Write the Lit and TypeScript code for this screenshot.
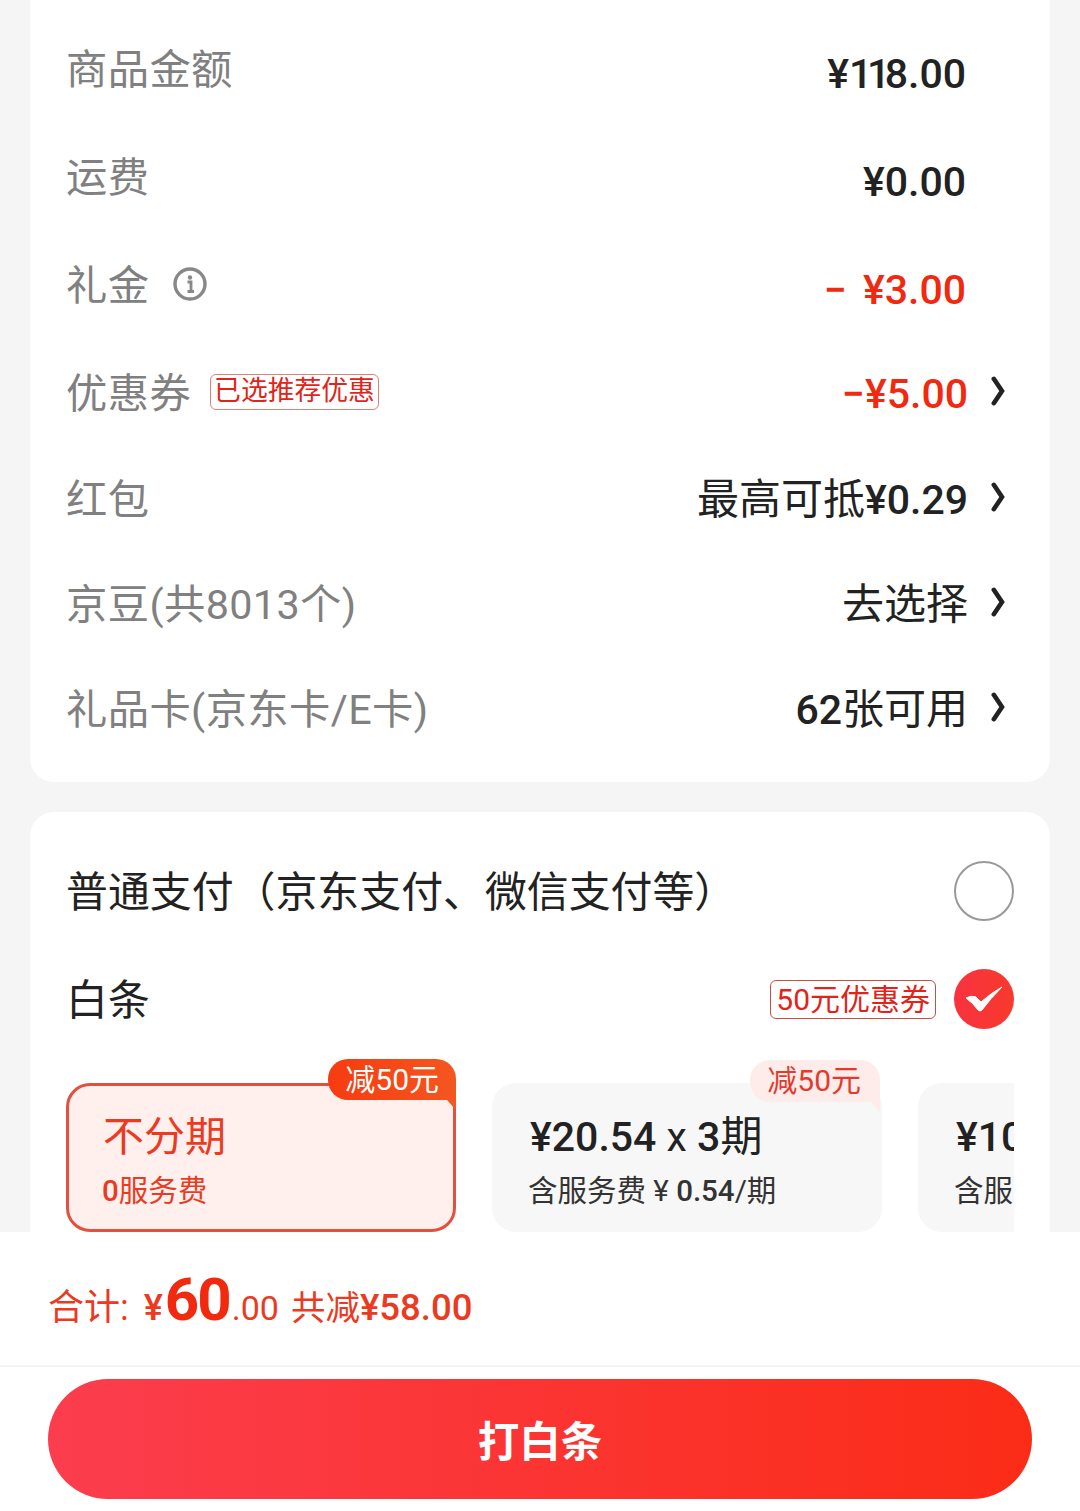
import { LitElement, html, css } from "lit";
import { customElement } from "lit/decorators.js";

const chevron = html`<svg class="chev" viewBox="0 0 14 30" width="14" height="30"><path d="M2.8 2.8 L11 15 L2.8 27.2" fill="none" stroke="#222" stroke-width="4.6" stroke-linejoin="miter" stroke-linecap="round"/></svg>`;

@customElement("app-root")
export class AppRoot extends LitElement {
  static styles = css`
    :host { display: block; width: 1080px; height: 1511px; overflow: hidden; background: #f5f5f5;
      font-family: "Roboto", "Noto Sans CJK SC", sans-serif; color: #222; }
    * { box-sizing: border-box; }
    .main { height: 1232px; overflow: hidden; padding: 0 30px; }
    .card { background: #fff; border-radius: 24px; padding: 0 36px; }
    .fees { margin-top: -20px; padding-top: 35px; padding-bottom: 19px; }
    .row { display: flex; align-items: center; height: 106px; }
    .h109 { height: 109px; }
    .h108 { height: 108px; }
    .h107 { height: 107px; }
    .h103 { height: 103px; }
    .label { font-size: 41.3px; color: #808080; white-space: nowrap; line-height: 50px; letter-spacing: 0.4px; }
    .val { margin-left: auto; font-size: 41px; font-weight: 500; color: #222; line-height: 50px; white-space: nowrap; }
    .val.low { padding-top: 8px; margin-right: 48px; }
    .val.red, .red { color: #f0290f; }
    .cjk { font-weight: 400; font-size: 42px; }
    .ones { letter-spacing: -5.5px; }
    .dash { margin-right: 6px; }
    .slot { width: 46px; display: flex; justify-content: flex-end; padding-right: 9px; flex: none; }
    .chev { display: block; margin-top: -6px; }
    .info { margin-left: 24px; margin-top: -4px; display: block; }
    .tag { margin-left: 19px; margin-top: -3px; height: 36px; padding: 0 3px 0 3px; border: 1px solid #d98478; border-radius: 6px;
      color: #e2231a; font-size: 26.8px; line-height: 32px; white-space: nowrap; }
    .pay { margin-top: 30px; padding-top: 25px; padding-bottom: 40px; }
    .pay .row { height: 108px; }
    .pay-label { font-size: 41.9px; color: #222; line-height: 50px; white-space: nowrap; padding-top: 4px; }
    .coupon { margin-left: auto; height: 39px; padding: 0 5px; border: 1px solid #c9503f; border-radius: 6px;
      color: #e2231a; font-size: 30px; line-height: 37px; white-space: nowrap; margin-right: 18px; }
    .radio { width: 60px; height: 60px; border-radius: 50%; border: 2px solid #999; flex: none; margin-left: auto; }
    .check { width: 60px; height: 60px; display: block; flex: none; }
    .plans { display: flex; gap: 36px; margin-top: 5px; padding-top: 25px; overflow: hidden; width: 948px; }
    .plan { position: relative; flex: none; width: 390px; height: 149px; border-radius: 24px; background: #f7f7f7; padding: 29px 0 0 38px; }
    .plan.on { background: #ffefed; border: 3px solid #e2503f; padding: 26px 0 0 34px; }
    .plan-title { font-size: 41px; font-weight: 500; line-height: 50px; white-space: nowrap; }
    .plan.on .plan-title { color: #ea3b22; font-weight: 400; }
    .plan-sub { font-size: 29.5px; line-height: 36px; margin-top: 11px; color: #333; white-space: nowrap; margin-left: -2px; }
    .plan.on .plan-sub { color: #ea3b22; margin-left: -1px; }
    .num { font-weight: 500; }
    .x { font-weight: 400; }
    .badge { position: absolute; top: -23px; right: 2px; height: 42px; padding: 0 19px 0 17px; font-size: 30px; line-height: 42px; white-space: nowrap;
      background: #fdecea; color: #e23b2e; border-radius: 20px 20px 0 20px; }
    .plan.on .badge { top: -27px; right: -3px; height: 41px; background: linear-gradient(90deg, #f73b10, #f4571f); color: #fff; padding: 0 17px; }
    .fold { position: absolute; top: 19px; right: 2px; width: 9px; height: 10px; background: #fdecea; clip-path: polygon(0 0, 100% 0, 100% 100%); }
    .plan.on .fold { top: 14px; right: -3px; background: #f4571f; }
    .foot { background: #fff; height: 279px; }
    .total { height: 135px; border-bottom: 2px solid #f4f4f4; padding: 36px 0 0 48px; display: flex; align-items: baseline; white-space: nowrap; color: #ea3b22; line-height: 64px; }
    .t-lab { font-size: 36px; margin-right: 15px; }
    .t-y { font-size: 36px; font-weight: 500; margin-right: 2px; }
    .t-big { font-size: 60px; font-weight: 700; color: #f0290f; letter-spacing: -2px; }
    .t-dec { font-size: 34px; font-weight: 400; margin-left: 2px; margin-right: 12px; }
    .t-save { font-size: 34.5px; }
    .t-save b { font-weight: 500; font-size: 36.5px; }
    .btn-wrap { padding: 12px 48px 0; }
    .btn { height: 120px; border-radius: 60px; background: linear-gradient(90deg, #fb3d4e, #fb2c17);
      color: #fff; font-size: 41.5px; font-weight: 700; display: flex; align-items: center; justify-content: center; }
  `;

  render() {
    return html`
      <div class="main">
        <div class="card fees">
          <div class="row h109"><span class="label">商品金额</span><span class="val low">¥<span class="ones">11</span>8.00</span></div>
          <div class="row h108"><span class="label">运费</span><span class="val low">¥0.00</span></div>
          <div class="row h108"><span class="label">礼金</span>
            <svg class="info" width="34" height="34" viewBox="0 0 34 34"><circle cx="17" cy="17" r="15" fill="none" stroke="#888" stroke-width="3.4"/><circle cx="17" cy="10.5" r="2.2" fill="#888"/><path d="M14.5 15 H18 V24 M14.5 24.5 H21" fill="none" stroke="#888" stroke-width="2.8"/></svg>
            <span class="val low red"><span class="dash">−</span> ¥3.00</span></div>
          <div class="row h107"><span class="label">优惠券</span><span class="tag">已选推荐优惠</span>
            <span class="val red">−¥5.00</span><span class="slot">${chevron}</span></div>
          <div class="row"><span class="label">红包</span><span class="val"><span class="cjk">最高可抵</span>¥0.29</span><span class="slot">${chevron}</span></div>
          <div class="row h103"><span class="label">京豆(共8013个)</span><span class="val cjk">去选择</span><span class="slot">${chevron}</span></div>
          <div class="row h107"><span class="label">礼品卡(京东卡/E卡)</span><span class="val">62<span class="cjk">张可用</span></span><span class="slot">${chevron}</span></div>
        </div>
        <div class="card pay">
          <div class="row"><span class="pay-label">普通支付（京东支付、微信支付等）</span><span class="radio"></span></div>
          <div class="row"><span class="pay-label">白条</span><span class="coupon">50元优惠券</span>
            <svg class="check" viewBox="0 0 60 60">
              <defs><linearGradient id="g" x1="0" x2="1"><stop offset="0" stop-color="#f8323f"/><stop offset="1" stop-color="#f83a2c"/></linearGradient></defs>
              <circle cx="30" cy="30" r="30" fill="url(#g)"/>
              <path d="M12 29 Q17 26 22 28 L27 33 Q37 24 48 18 Q36 30 28 41 Q26 43 24 41 Q19 34 12 29 Z" fill="#fff" stroke="#fff" stroke-width="1" stroke-linejoin="round"/>
            </svg></div>
          <div class="plans">
            <div class="plan on">
              <span class="badge">减50元</span><span class="fold"></span>
              <div class="plan-title">不分期</div>
              <div class="plan-sub"><span class="num">0</span>服务费</div>
            </div>
            <div class="plan">
              <span class="badge">减50元</span><span class="fold"></span>
              <div class="plan-title">¥20.54 <span class="x">x</span> 3<span class="cjk">期</span></div>
              <div class="plan-sub">含服务费 ¥ <span class="num">0.54</span>/期</div>
            </div>
            <div class="plan">
              <div class="plan-title">¥10.54</div>
              <div class="plan-sub">含服务费</div>
            </div>
          </div>
        </div>
      </div>
      <div class="foot">
        <div class="total">
          <span class="t-lab">合计:</span><span class="t-y">¥</span><span class="t-big">60</span><span class="t-dec">.00</span>
          <span class="t-save">共减<b>¥58.00</b></span>
        </div>
        <div class="btn-wrap"><div class="btn">打白条</div></div>
      </div>
    `;
  }
}
